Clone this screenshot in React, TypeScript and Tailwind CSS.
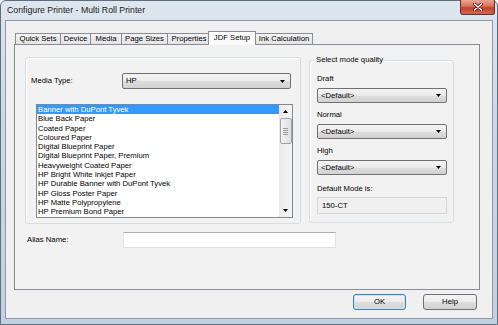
import React from 'react'

const mediaItems = [
  'Banner with DuPont Tyvek',
  'Blue Back Paper',
  'Coated Paper',
  'Coloured Paper',
  'Digital Blueprint Paper',
  'Digital Blueprint Paper, Premium',
  'Heavyweight Coated Paper',
  'HP Bright White Inkjet Paper',
  'HP Durable Banner with DuPont Tyvek',
  'HP Gloss Poster Paper',
  'HP Matte Polypropylene',
  'HP Premium Bond Paper',
]

const tabs: [string, number, string][] = [
  ['Quick Sets', 46, ''],
  ['Device', 31, '-ml-px'],
  ['Media', 32, '-ml-px'],
  ['Page Sizes', 47, '-ml-px'],
  ['Properties', 44, '-ml-px'],
]

function Arrow({ up = false }: { up?: boolean }) {
  return (
    <svg width="5" height="3" viewBox="0 0 5 3" className="block">
      <path d={up ? 'M0 3 L2.5 0 L5 3 Z' : 'M0 0 L5 0 L2.5 3 Z'} fill="#000" />
    </svg>
  )
}

function Combo({ text, className }: { text: string; className: string }) {
  return (
    <div
      className={`flex items-center justify-between rounded-[2px] border border-[#707070] bg-[linear-gradient(to_bottom,#f3f3f3,#ebebeb_50%,#dddddd_50%,#d2d2d2)] pl-[3px] pr-[5px] ${className}`}
    >
      <span className="leading-none">{text}</span>
      <Arrow />
    </div>
  )
}

function Button({ label, primary = false }: { label: string; primary?: boolean }) {
  return (
    <div
      className={`flex h-[16px] items-center justify-center rounded-[3px] border bg-[linear-gradient(to_bottom,#f4f4f4,#ececec_50%,#dedede_50%,#d2d2d2)] ${
        primary ? 'w-[53px] border-[#3c7fb1] shadow-[inset_0_0_0_1px_#c8e6f7]' : 'w-[54px] border-[#707070]'
      }`}
    >
      {label}
    </div>
  )
}

export default function App() {
  return (
    <div className="h-[325px] w-[498px] overflow-hidden bg-white">
      <div className="relative flex h-[325px] w-[498px] flex-col rounded-t-[6px] border border-[#5f6f80] bg-[linear-gradient(to_bottom,#dee6ef,#cbd8e6_40%,#c2d0df)] font-['Liberation_Sans',Arial,sans-serif] text-[7.7px] text-black">
        <div className="flex h-[19px] items-center pl-[6px] text-[8.75px] text-[#1b1b1b]">
          Configure Printer - Multi Roll Printer
        </div>

        <div className="absolute right-[2px] top-[-1px] flex h-[15px] w-[35px] items-center justify-center rounded-b-[3px] border border-t-0 border-[#6e2a22] bg-[linear-gradient(to_bottom,#e9a793,#d7705c_45%,#c2412f_55%,#d3684f)]">
          <svg width="10" height="8" viewBox="0 0 10 8">
            <path d="M1.5 1 L8.5 7 M8.5 1 L1.5 7" stroke="#5a1c14" strokeWidth="3" strokeLinecap="round" />
            <path d="M1.5 1 L8.5 7 M8.5 1 L1.5 7" stroke="#fff" strokeWidth="1.5" strokeLinecap="round" />
          </svg>
        </div>

        <div className="mx-[4px] h-[299px] border border-[#8d99a7] bg-[#f0f0f0]">
          <div className="ml-[8px] mt-[10px] w-[466px]">
            <div className="flex h-[13px] items-end pl-[1px]">
              {tabs.map(([name, w, m]) => (
                <div
                  key={name}
                  style={{ width: w }}
                  className={`flex h-[11px] shrink-0 items-center justify-center border border-b-0 border-[#898c95] bg-[linear-gradient(to_bottom,#f3f3f3,#e3e3e3)] leading-none ${m}`}
                >
                  {name}
                </div>
              ))}
              <div className="relative z-10 -mb-px -ml-[3px] flex h-[14px] w-[48px] shrink-0 items-center justify-center border border-b-0 border-[#898c95] bg-[linear-gradient(to_bottom,#ffffff,#f9f9f9)] pb-[2px] leading-none">
                JDF Setup
              </div>
              <div className="-ml-px flex h-[11px] w-[58px] shrink-0 items-center justify-center border border-b-0 border-[#898c95] bg-[linear-gradient(to_bottom,#f3f3f3,#e3e3e3)] leading-none">
                Ink Calculation
              </div>
            </div>

            <div className="h-[246px] border border-[#898c95] bg-[#f2f2f2]">
              <div className="flex items-start pl-[10px] pt-[12px]">
                {/* media group */}
                <div className="h-[167px] w-[276px] rounded-[3px] border border-[#d8dfe4] shadow-[inset_1px_1px_0_#fff]">
                  <div className="mt-[15px] flex items-center pl-[5px]">
                    <div className="w-[91px]">Media Type:</div>
                    <Combo text="HP" className="h-[16px] w-[169px]" />
                  </div>
                  <div className="ml-[10px] mt-[15px] flex h-[114px] w-[257px] border border-[#828790] bg-white">
                    <div className="flex-1 overflow-hidden">
                      {mediaItems.map((item, i) => (
                        <div
                          key={item}
                          className={`h-[9.3px] whitespace-nowrap pl-[1px] leading-[9.3px] ${
                            i === 0 ? 'bg-[#3399ff] text-white' : ''
                          }`}
                        >
                          {item}
                        </div>
                      ))}
                    </div>
                    <div className="flex w-[13px] flex-col items-center bg-[linear-gradient(to_right,#e9e9e9,#f5f5f5)]">
                      <div className="flex h-[13px] items-center">
                        <Arrow up />
                      </div>
                      <div className="mt-[0px] flex h-[26px] w-[12px] flex-col items-center justify-center gap-[1px] rounded-[2px] border border-[#a3a3a3] bg-[linear-gradient(to_right,#f4f4f4,#dedede)]">
                        <div className="h-px w-[5px] bg-[#999]" />
                        <div className="h-px w-[5px] bg-[#999]" />
                        <div className="h-px w-[5px] bg-[#999]" />
                        <div className="h-px w-[5px] bg-[#999]" />
                      </div>
                      <div className="flex-1" />
                      <div className="flex h-[13px] items-center">
                        <Arrow />
                      </div>
                    </div>
                  </div>
                </div>

                {/* quality group */}
                <div className="relative ml-[8px] mt-[3px] h-[163px] w-[145px] rounded-[3px] border border-[#d8dfe4] pl-[7px] shadow-[inset_1px_1px_0_#fff]">
                  <div className="absolute left-[5px] top-[-6px] bg-[#f2f2f2] px-[1px] leading-[10px]">
                    Select mode quality
                  </div>
                  <div className="mt-[13px] h-[10px] leading-[10px]">Draft</div>
                  <Combo text="<Default>" className="mt-[4px] h-[15px] w-[130px]" />
                  <div className="mt-[7px] h-[10px] leading-[10px]">Normal</div>
                  <Combo text="<Default>" className="mt-[4px] h-[15px] w-[130px]" />
                  <div className="mt-[7px] h-[10px] leading-[10px]">High</div>
                  <Combo text="<Default>" className="mt-[4px] h-[15px] w-[130px]" />
                  <div className="mt-[9px] h-[10px] leading-[10px]">Default Mode is:</div>
                  <div className="mt-[3px] flex h-[17px] w-[130px] items-center border border-[#d6d6d6] bg-[#f0f0f0] pl-[4px]">
                    150-CT
                  </div>
                </div>
              </div>

              <div className="mt-[8px] flex items-center pl-[12px]">
                <div className="w-[96px]">Alias Name:</div>
                <div className="h-[16px] w-[213px] border border-[#e2e3ea] border-t-[#abadb3] bg-white" />
              </div>
            </div>
          </div>

          <div className="mt-[4px] flex justify-end gap-[17px] pr-[15px]">
            <Button label="OK" primary />
            <Button label="Help" />
          </div>
        </div>
      </div>
    </div>
  )
}
